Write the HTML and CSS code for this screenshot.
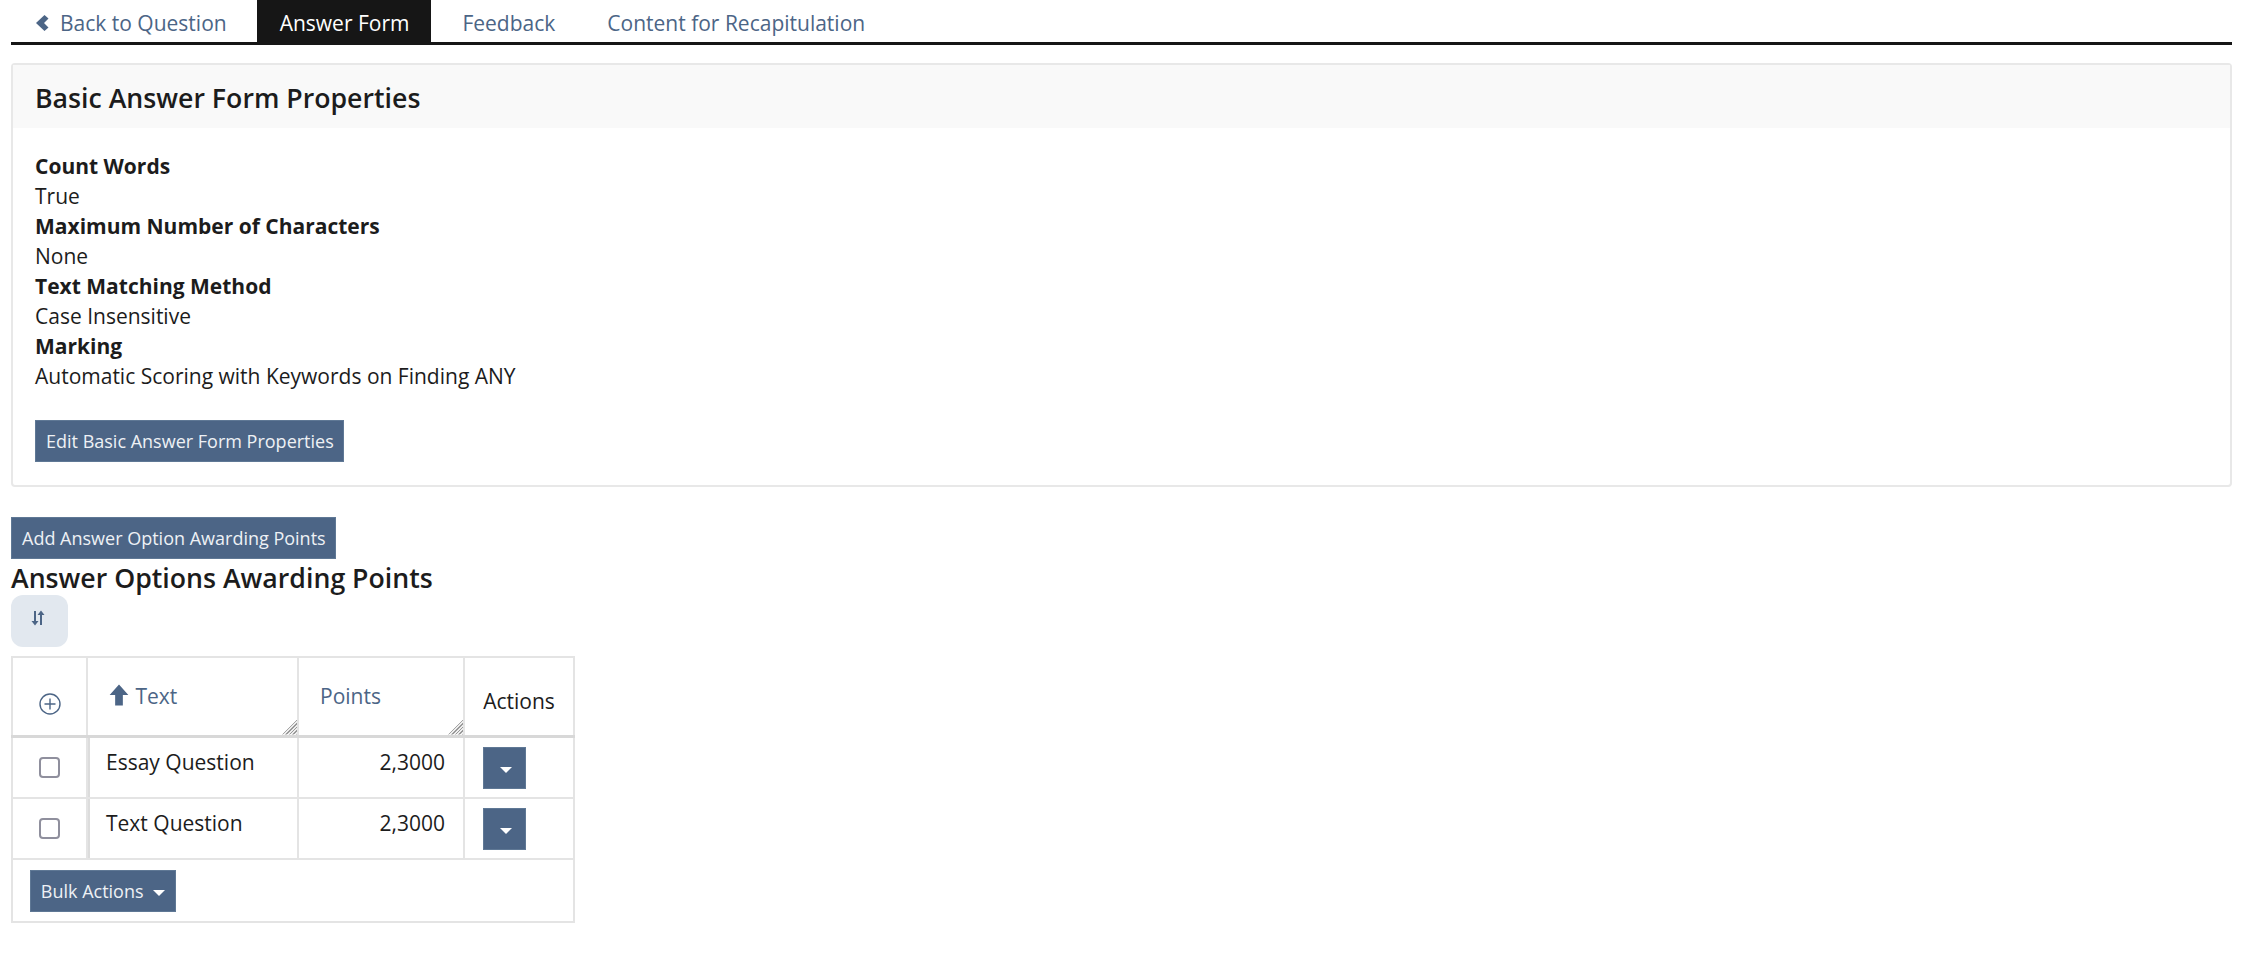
FILE: index.html
```html
<!DOCTYPE html>
<html lang="en">
<head>
    <meta charset="UTF-8">
    <title>Answer Form</title>
    <link rel="stylesheet" href="styles.css">
</head>
<body>
    <!-- Tabs -->
    <ul class="tabs">
        <li class="tab back">
            <svg class="back-icon" viewBox="0 0 13 16"><path d="M8.500 0 L12.500 3.500 L8 8 L12.500 12.500 L8.500 16 L0 8 Z"/></svg>
            <a href="#">Back to Question</a>
        </li>
        <li class="tab active"><a href="#">Answer Form</a></li>
        <li class="tab"><a href="#">Feedback</a></li>
        <li class="tab"><a href="#">Content for Recapitulation</a></li>
    </ul>

    <!-- Properties card -->
    <div class="card">
        <h2 class="card-title">Basic Answer Form Properties</h2>
        <div class="card-body">
            <dl class="props">
                <dt>Count Words</dt>
                <dd>True</dd>
                <dt>Maximum Number of Characters</dt>
                <dd>None</dd>
                <dt>Text Matching Method</dt>
                <dd>Case Insensitive</dd>
                <dt>Marking</dt>
                <dd>Automatic Scoring with Keywords on Finding ANY</dd>
            </dl>
            <button class="btn">Edit Basic Answer Form Properties</button>
        </div>
    </div>

    <button class="btn add-btn">Add Answer Option Awarding Points</button>
    <h3 class="section-title">Answer Options Awarding Points</h3>
    <button class="sort-btn">
        <svg class="sort-icon" viewBox="0 0 14 16"><path d="M3 1h2v10h2.500L4 15.500 0.500 11H3Z"/><path d="M9 15h2V5h2.500L10 0.500 6.500 5H9Z"/></svg>
    </button>

    <!-- Options table -->
    <table class="options">
        <colgroup>
            <col class="col-check">
            <col class="col-text">
            <col class="col-points">
            <col class="col-actions">
        </colgroup>
        <thead>
            <tr>
                <th class="low">
                    <svg class="plus-icon" viewBox="0 0 22 22"><circle cx="11" cy="11" r="10"/><path d="M11 5.500v11M5.500 11h11"/></svg>
                </th>
                <th class="sortable">
                    <svg class="arrow-icon" viewBox="0 0 18 20"><path d="M9 0.500 17.500 10H12.500V19.500H5.500V10H0.500Z"/></svg>
                    <a href="#">Text</a>
                    <span class="grip"></span>
                </th>
                <th class="sortable">
                    <a href="#">Points</a>
                    <span class="grip"></span>
                </th>
                <th class="low actions-head">Actions</th>
            </tr>
        </thead>
        <tbody>
            <tr class="first-row">
                <td class="check"><span class="checkbox"></span></td>
                <td class="text-cell">Essay Question</td>
                <td class="num">2,3000</td>
                <td class="act"><button class="btn caret-btn"><span class="caret"></span></button></td>
            </tr>
            <tr>
                <td class="check"><span class="checkbox"></span></td>
                <td class="text-cell">Text Question</td>
                <td class="num">2,3000</td>
                <td class="act"><button class="btn caret-btn"><span class="caret"></span></button></td>
            </tr>
        </tbody>
        <tfoot>
            <tr>
                <td colspan="4" class="foot">
                    <button class="btn bulk-btn">Bulk Actions <span class="caret"></span></button>
                </td>
            </tr>
        </tfoot>
    </table>
</body>
</html>
```

FILE: styles.css
```css
/* General */
body {
    margin: 0;
    padding: 0 12px 0 11px;
    font-family: "Open Sans", sans-serif;
    font-size: 21px;
    line-height: 30px;
    color: #1c1c1c;
    background: #fff;
}
a {
    color: #4c6586;
    text-decoration: none;
}

/* Tabs */
.tabs {
    display: flex;
    margin: 0;
    padding: 0;
    list-style: none;
    height: 42px;
    border-bottom: 3px solid #161616;
}
.tab {
    display: flex;
    align-items: center;
    padding: 3px 26px 0;
    height: 42px;
    box-sizing: border-box;
}
.tab.back {
    padding: 3px 30px 0 25px;
}
.tab.active {
    padding: 3px 22px 0 23px;
    margin-right: 5px;
    background: #161616;
}
.tab.active a {
    color: #fff;
}
.back-icon {
    width: 13px;
    height: 16px;
    margin-right: 11px;
    fill: #4c6586;
}

/* Card */
.card {
    margin-top: 18px;
    border: 2px solid #e8e8e8;
    border-radius: 4px;
}
.card-title {
    margin: 0;
    padding: 1px 22px 0;
    height: 62px;
    line-height: 63px;
    background: #f9f9f9;
    font-size: 26.700px;
    font-weight: 600;
}
.card-body {
    padding: 23px 22px 23px;
}
.props {
    margin: 0 0 29px;
}
.props dt {
    font-weight: 700;
}
.props dd {
    margin: 0;
}

/* Buttons */
.btn {
    display: block;
    height: 42px;
    padding: 0 9px 0 10px;
    border: 1px solid #5f7895;
    background: #4c6586;
    color: #eef1f5;
    font-family: inherit;
    font-size: 18px;
}
.add-btn {
    margin-top: 30px;
}
.sort-btn {
    display: flex;
    align-items: center;
    justify-content: center;
    width: 57px;
    height: 52px;
    padding: 0 4px 6px 0;
    border: none;
    border-radius: 12px;
    background: #e2e8ef;
}
.sort-icon {
    width: 14px;
    height: 16px;
    fill: #4c6586;
}
.section-title {
    margin: 0;
    height: 36px;
    line-height: 37px;
    font-size: 26.700px;
    font-weight: 600;
}

/* Table */
.options {
    margin-top: 9px;
    width: 562px;
    table-layout: fixed;
    border-collapse: collapse;
    border: 2px solid #e4e4e4;
}
.col-check { width: 75px; }
.col-text { width: 211px; }
.col-points { width: 166px; }
.col-actions { width: 110px; }
.options th,
.options td {
    border: 2px solid #e4e4e4;
    padding: 0;
    text-align: left;
}
.options thead tr {
    height: 79px;
}
.options thead th {
    border-bottom: 3px solid #d8d8d8;
    font-weight: 400;
}
.options th.low {
    padding-top: 10px;
    text-align: center;
}
.options th.sortable {
    position: relative;
    padding: 0 0 0 21px;
}
.arrow-icon {
    width: 20px;
    height: 22px;
    margin-right: 1px;
    vertical-align: -2px;
    fill: #4c6586;
}
.plus-icon {
    width: 22px;
    height: 22px;
    vertical-align: middle;
    fill: none;
    stroke: #4c6586;
    stroke-width: 1.400;
}
/* Column resize handle */
.grip {
    position: absolute;
    right: 0;
    bottom: 0;
    width: 15px;
    height: 15px;
    clip-path: polygon(100% 0, 100% 100%, 0 100%);
    background: repeating-linear-gradient(135deg, #999 0 1px, #eee 1px 2.500px);
}
.options tbody tr {
    height: 61px;
}
.options tbody tr.first-row {
    height: 62px;
}
.options td.text-cell,
.options td.num,
.options td.act {
    vertical-align: top;
    padding-top: 9px;
}
.options td.text-cell {
    padding-left: 18px;
    box-shadow: inset 2px 0 0 #dcdcdc;
}
.options td.num {
    padding-right: 18px;
    text-align: right;
}
.options td.act {
    padding: 9px 0 0 18px;
}
.options td.check {
    padding-bottom: 4px;
    text-align: center;
}
.checkbox {
    display: inline-block;
    width: 21px;
    height: 21px;
    box-sizing: border-box;
    border: 2px solid #8f8f9d;
    border-radius: 4px;
    vertical-align: middle;
}
.options td.foot {
    height: 61px;
    padding-left: 17px;
}
.caret-btn {
    width: 43px;
    padding: 0 0 0 2px;
}
.caret {
    display: inline-block;
    width: 0;
    height: 0;
    border-top: 6px solid #fff;
    border-left: 6px solid transparent;
    border-right: 6px solid transparent;
    vertical-align: 2px;
}
.bulk-btn {
    width: 146px;
    padding: 0;
}
.bulk-btn .caret {
    margin-left: 5px;
}
```
